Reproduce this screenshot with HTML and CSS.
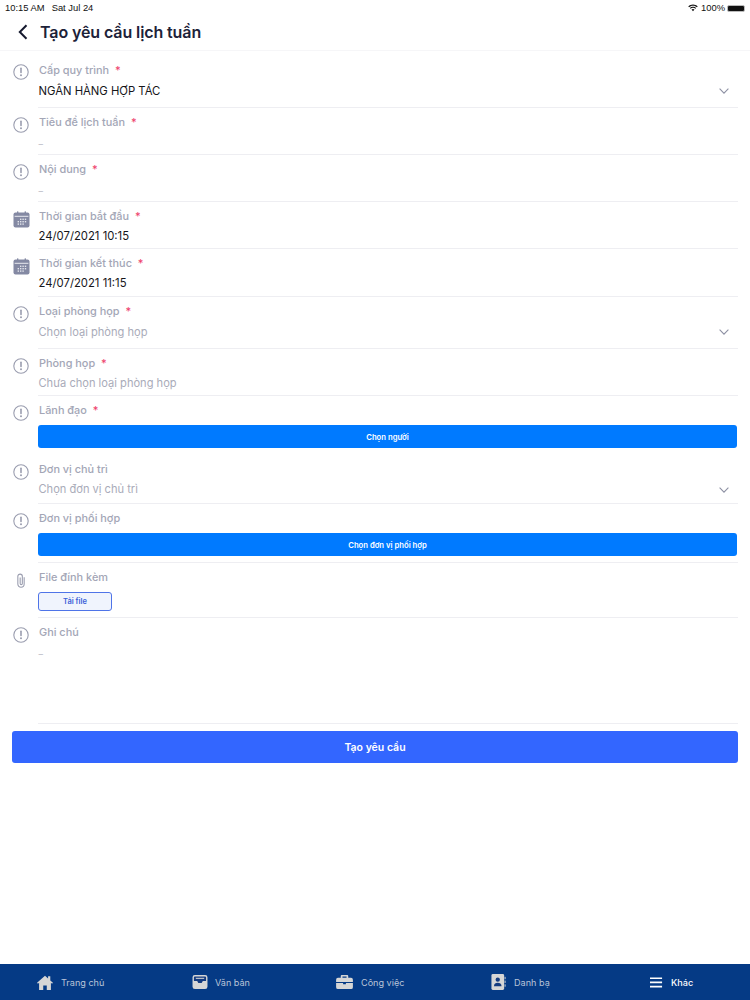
FILE: index.html
```html
<!DOCTYPE html>
<html lang="vi">
<head>
<meta charset="utf-8">
<title>Tạo yêu cầu lịch tuần</title>
<link rel="stylesheet" href="styles.css">
</head>
<body>
<svg class="defs" width="0" height="0" aria-hidden="true">
  <defs>
    <symbol id="info" viewBox="0 0 16 16">
      <circle cx="8" cy="8" r="7.2" fill="none" stroke="#9a9daf" stroke-width="1.1"/>
      <rect x="7.2" y="3.6" width="1.6" height="5.6" rx=".7" fill="#9a9daf"/>
      <circle cx="8" cy="11.3" r="1" fill="#9a9daf"/>
    </symbol>
    <symbol id="cal" viewBox="0 0 17 17">
      <rect x="0.5" y="1.5" width="16" height="15" rx="2" fill="#8489a3"/>
      <rect x="1.6" y="4.8" width="13.8" height="1" fill="#e8e9ef"/>
      <rect x="4" y="0.2" width="1.4" height="2.6" rx=".6" fill="#8489a3"/>
      <rect x="11.6" y="0.2" width="1.4" height="2.6" rx=".6" fill="#8489a3"/>
      <g fill="#e3e5ec">
        <rect x="7" y="7.6" width="1.4" height="1.4"/><rect x="9.4" y="7.6" width="1.4" height="1.4"/><rect x="11.8" y="7.6" width="1.4" height="1.4"/>
        <rect x="4.6" y="10" width="1.4" height="1.4"/><rect x="7" y="10" width="1.4" height="1.4"/><rect x="9.4" y="10" width="1.4" height="1.4"/><rect x="11.8" y="10" width="1.4" height="1.4"/>
        <rect x="4.6" y="12.4" width="1.4" height="1.4"/><rect x="7" y="12.4" width="1.4" height="1.4"/><rect x="9.4" y="12.4" width="1.4" height="1.4"/>
      </g>
    </symbol>
    <symbol id="chev" viewBox="0 0 10 6">
      <path d="M.6.7 5 5.1 9.4.7" fill="none" stroke="#8d90a3" stroke-width="1.1"/>
    </symbol>
  </defs>
</svg>
<div class="app">
  <div class="status">
    <span class="status-left">10:15 AM<span class="status-date">Sat Jul 24</span></span>
    <span class="status-right">
      <svg class="wifi" viewBox="0 0 16 12"><path d="M8 2.2c2.5 0 4.700 1 6.300 2.500L15.500 3.400C13.500 1.500 10.900.4 8 .4S2.500 1.500.5 3.400l1.200 1.300C3.300 3.200 5.500 2.200 8 2.200z"/><path d="M8 5.700c1.500 0 2.800.6 3.800 1.500l1.200-1.300C11.700 4.700 9.900 3.900 8 3.900s-3.700.8-5 2l1.200 1.300c1-.9 2.300-1.500 3.800-1.500z"/><path d="M8 7.500c-1 0-1.800.4-2.400 1L8 11.200l2.400-2.700c-.6-.6-1.400-1-2.400-1z"/></svg>
      100%
      <span class="battery"></span>
    </span>
  </div>
  <header class="head">
    <svg class="back" viewBox="0 0 10 16"><path d="M8.500 1.200 1.800 8l6.700 6.800" fill="none" stroke="#15192e" stroke-width="2"/></svg>
    <h1>Tạo yêu cầu lịch tuần</h1>
  </header>

  <main class="form">
    <section class="row first r57">
      <svg class="ico"><use href="#info"/></svg>
      <div class="body"><div class="lab">Cấp quy trình <b>*</b></div><div class="val dark">NGÂN HÀNG HỢP TÁC</div></div>
      <svg class="chev"><use href="#chev"/></svg>
    </section>
    <section class="row r47">
      <svg class="ico"><use href="#info"/></svg>
      <div class="body"><div class="lab">Tiêu đề lịch tuần <b>*</b></div><div class="val dash">–</div></div>
    </section>
    <section class="row r47">
      <svg class="ico"><use href="#info"/></svg>
      <div class="body"><div class="lab">Nội dung <b>*</b></div><div class="val dash">–</div></div>
    </section>
    <section class="row r47">
      <svg class="ico cal"><use href="#cal"/></svg>
      <div class="body"><div class="lab">Thời gian bắt đầu <b>*</b></div><div class="val dark up">24/07/2021 10:15</div></div>
    </section>
    <section class="row r48">
      <svg class="ico cal"><use href="#cal"/></svg>
      <div class="body"><div class="lab">Thời gian kết thúc <b>*</b></div><div class="val dark up">24/07/2021 11:15</div></div>
    </section>
    <section class="row r52">
      <svg class="ico"><use href="#info"/></svg>
      <div class="body"><div class="lab">Loại phòng họp <b>*</b></div><div class="val">Chọn loại phòng họp</div></div>
      <svg class="chev"><use href="#chev"/></svg>
    </section>
    <section class="row r47">
      <svg class="ico"><use href="#info"/></svg>
      <div class="body"><div class="lab">Phòng họp <b>*</b></div><div class="val up">Chưa chọn loại phòng họp</div></div>
    </section>
    <section class="row r60 plain">
      <svg class="ico"><use href="#info"/></svg>
      <div class="body"><div class="lab">Lãnh đạo <b>*</b></div><button class="pick">Chọn người</button></div>
    </section>
    <section class="row tight r48">
      <svg class="ico"><use href="#info"/></svg>
      <div class="body"><div class="lab">Đơn vị chủ trì</div><div class="val up">Chọn đơn vị chủ trì</div></div>
      <svg class="chev"><use href="#chev"/></svg>
    </section>
    <section class="row r59">
      <svg class="ico"><use href="#info"/></svg>
      <div class="body"><div class="lab">Đơn vị phối hợp</div><button class="pick">Chọn đơn vị phối hợp</button></div>
    </section>
    <section class="row r55">
      <svg class="ico clip" viewBox="0 0 12 18"><path d="M9.800 5v8.300a3.800 3.800 0 0 1-7.600 0V4a2.700 2.700 0 0 1 5.400 0v8.600a1.300 1.300 0 0 1-2.600 0V5.500" fill="none" stroke="#9a9daf" stroke-width="1.300"/></svg>
      <div class="body"><div class="lab">File đính kèm</div><button class="upload">Tải file</button></div>
    </section>
    <section class="row r106">
      <svg class="ico"><use href="#info"/></svg>
      <div class="body"><div class="lab">Ghi chú</div><div class="val dash">–</div></div>
    </section>
    <button class="submit">Tạo yêu cầu</button>
  </main>

  <nav class="tabs">
    <a class="tab t1"><svg viewBox="0 0 18 17"><path d="M9 .8 0 8.800l1 1.200 1.300-1.100V17h4.700v-5h4v5h4.700V8.900L17 10l1-1.200-3-2.700V1.500h-2.500v2.400z" fill="#d6d6d6"/></svg>Trang chủ</a>
    <a class="tab t2"><svg viewBox="0 0 17 15"><path d="M3 0h11a2.500 2.500 0 0 1 2.500 2.500v10A2.500 2.500 0 0 1 14 15H3a2.500 2.500 0 0 1-2.500-2.500v-10A2.500 2.500 0 0 1 3 0z" fill="#d6d6d6"/><path d="M2 6.500h3.500l1.200 2h3.600l1.200-2H15V2.500A1 1 0 0 0 14 1.500H3a1 1 0 0 0-1 1z" fill="#143b80"/><rect x="4" y="3" width="9" height="1.100" fill="#d6d6d6"/></svg>Văn bản</a>
    <a class="tab t3"><svg viewBox="0 0 18 15"><path d="M6 0h6a1 1 0 0 1 1 1v2h3a2 2 0 0 1 2 2v2.500H0V5a2 2 0 0 1 2-2h3V1a1 1 0 0 1 1-1zm.8 1.500V3h4.400V1.500zM0 8.700h7.500v1.200h3V8.700H18V13a2 2 0 0 1-2 2H2a2 2 0 0 1-2-2z" fill="#d6d6d6" fill-rule="evenodd"/></svg>Công việc</a>
    <a class="tab t4"><svg viewBox="0 0 15 17"><rect x="0" y="0" width="13.500" height="17" rx="1.500" fill="#d6d6d6"/><circle cx="6.700" cy="6" r="2.300" fill="#143b80"/><path d="M2.700 13c0-2.500 1.800-3.600 4-3.600s4 1.100 4 3.600z" fill="#143b80"/><g fill="#d6d6d6"><rect x="14" y="3" width="1" height="2.500"/><rect x="14" y="7" width="1" height="2.500"/><rect x="14" y="11" width="1" height="2.500"/></g></svg>Danh bạ</a>
    <a class="tab t5 on"><svg viewBox="0 0 14 11"><path d="M0 0h13v1.800H0zM0 4.500h13v1.800H0zM0 9h13v1.800H0z" fill="#fff"/></svg>Khác</a>
  </nav>
</div>
</body>
</html>
```

FILE: styles.css
```css
* { box-sizing: border-box; }
html, body { margin: 0; padding: 0; }
body { width: 750px; height: 1000px; overflow: hidden; background: #fff; font-family: Inter, "Liberation Sans", sans-serif; }
.defs { display: block; height: 0; }
.app { width: 750px; height: 1000px; display: flex; flex-direction: column; }

.status { height: 16px; flex: none; display: flex; justify-content: space-between; align-items: center; padding: 0 5px 0 5px; font: 9.400px/14px "Liberation Sans", sans-serif; color: #111; }
.status-date { margin-left: 7px; }
.status-right { display: flex; align-items: center; gap: 3px; }
.wifi { width: 10px; height: 8px; fill: #111; }
.battery { width: 18px; height: 7px; margin-left: -1px; border-radius: 2px; background: #111; border: 1px solid #bbb; display: block; }

.head { height: 35px; flex: none; display: flex; align-items: center; padding: 0 0 3px 18px; border-bottom: 1px solid #f6f6f8; }
.back { width: 10px; height: 16px; }
h1 { margin: 0 0 0 12px; font-size: 16px; font-weight: 600; color: #1d2239; letter-spacing: -.1px; }

.form { flex: 1; }
.row { position: relative; display: flex; padding: 7px 12px 0 13px; }
.row.first { padding-top: 12px; }
.row.first .ico { margin-top: 1px; }
.row.tight { padding-top: 6px; }
.row::after { content: ""; position: absolute; left: 38px; right: 12px; bottom: 0; height: 1px; background: #eeeef2; }
.plain::after { display: none; }
.r47 { height: 47px; }
.r48 { height: 48px; }
.r52 { height: 52px; }
.r55 { height: 55px; }
.r57 { height: 57px; }
.r59 { height: 59px; }
.r60 { height: 60px; }
.r106 { height: 106px; }

.ico { width: 16px; height: 16px; flex: none; margin-top: 2px; }
.ico.cal { width: 17px; height: 17px; margin: 2px -1px 0 0; }
.ico.clip { width: 10px; height: 15px; margin: 3px 3px 0 3px; }
.body { flex: 1; min-width: 0; margin-left: 9px; }
.lab { padding-left: 1px; font-size: 10.900px; line-height: 14px; font-weight: 500; color: #a3a6b6; }
.lab b { color: #ee3f6c; font-weight: 500; margin-left: 3px; }
.val { padding-left: .5px; margin-top: 6px; font-size: 11.100px; line-height: 16px; color: #a9abb9; }
.val.up { margin-top: 5px; }
.val.dark { font-size: 11.300px; color: #16161a; }
.val.dash { margin-top: 7px; font-size: 9px; color: #b9bbc6; }
.chev { flex: none; width: 10px; height: 6px; margin: 25px 9px 0 0; }

.pick { display: block; width: 699px; height: 23px; margin-top: 8px; border: 0; border-radius: 3px; background: #007aff; color: #fff; font: 600 7.700px/23px Inter, "Liberation Sans", sans-serif; }
.upload { display: block; width: 74px; height: 19px; margin-top: 8px; padding: 0; border: 1px solid #4f74e8; border-radius: 3px; background: #f0f4fd; color: #3a5fd8; font: 600 7.500px/17px Inter, "Liberation Sans", sans-serif; }
.submit { display: block; width: 726px; height: 32px; margin: 7px 12px 0; border: 0; border-radius: 3px; background: #3366ff; color: #fff; font: 600 10.500px/32px Inter, "Liberation Sans", sans-serif; }

.tabs { height: 36px; flex: none; position: relative; background: #053a85; }
.tab { position: absolute; top: 0; height: 36px; display: flex; align-items: center; color: #b9c4d8; font-size: 9.100px; font-family: Inter, "Liberation Sans", sans-serif; }
.tab svg { display: block; flex: none; }
.tab.on { color: #fff; font-weight: 500; }
.t1 { left: 37px; } .t1 svg { width: 16px; height: 15px; margin-right: 8px; }
.t2 { left: 192px; } .t2 svg { width: 16px; height: 14px; margin-right: 7px; }
.t3 { left: 336px; } .t3 svg { width: 17px; height: 14px; margin-right: 8px; }
.t4 { left: 491px; } .t4 svg { width: 15px; height: 16px; margin-right: 8px; }
.t5 { left: 650px; } .t5 svg { width: 13px; height: 11px; margin-right: 8px; }
```
